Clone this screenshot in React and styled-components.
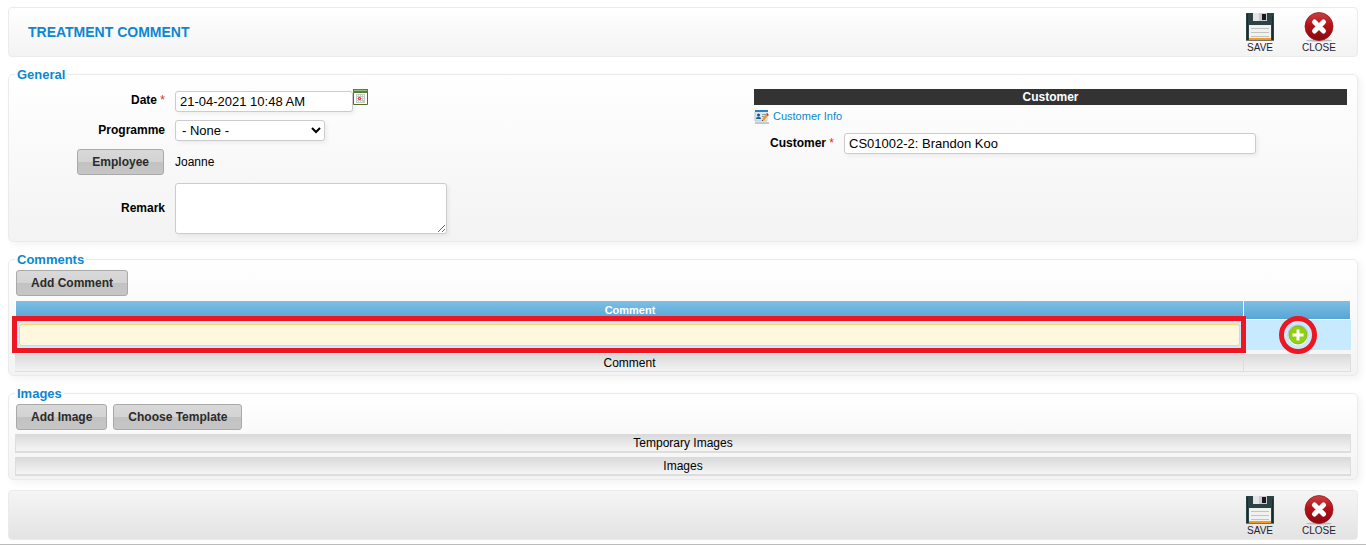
import React from 'react';
import styled, { createGlobalStyle } from 'styled-components';

const GlobalStyle = createGlobalStyle`
    * {
        box-sizing: border-box;
    }

    body {
        margin: 0;
        background: #fff;
        color: #000;
        font: 12px/15px "Liberation Sans", Arial, sans-serif;
    }

    input, select, textarea, button {
        margin: 0;
        font-family: inherit;
    }
`;

const Page = styled.main`
    display: flex;
    flex-direction: column;
    gap: 10px;
    padding: 7px 8px 4px;
    border-bottom: 1px solid #bbb;
`;

const Toolbar = styled.div`
    display: flex;
    justify-content: flex-end;
    gap: 19px;
    height: 50px;
    padding: 4px 18px 0 19px;
    border: 1px solid #ebebeb;
    border-radius: 4px;
    background: ${props => props.$dark
        ? 'linear-gradient(#f5f5f5, #e3e3e3)'
        : 'linear-gradient(#fff, #f3f3f3)'};
`;

const Title = styled.h1`
    flex: 1;
    margin: 0;
    color: #0c87d0;
    font-size: 14px;
    line-height: 40px;
`;

const ToolButton = styled.button`
    display: flex;
    flex-direction: column;
    align-items: center;
    width: 40px;
    padding: 0;
    border: 0;
    background: none;
    color: #1c2430;
    font-size: 10px;
    line-height: 12px;
    cursor: pointer;
`;

const Panel = styled.fieldset`
    min-width: 0;
    margin: 0;
    padding: ${props => props.$form ? '7px 10px 7px 8px' : '3px 6px'};
    border: 1px solid #ebebeb;
    border-radius: 5px;
    background: linear-gradient(#fff, #f3f3f3);
    box-shadow: 3px 3px 6px rgba(60, 90, 110, 0.07);
`;

const Legend = styled.legend`
    margin-left: ${props => props.$form ? '-2px' : '0'};
    padding: 0 2px;
    color: #0c87d0;
    font-size: 13px;
    font-weight: bold;
    line-height: 15px;
`;

const Columns = styled.div`
    display: grid;
    grid-template-columns: 737fr 593fr;
    align-items: start;
`;

const Fields = styled.div`
    display: grid;
    grid-template-columns: ${props => props.$labels} 1fr;
    align-items: center;
    gap: 8px 10px;
`;

const Label = styled.label`
    font-weight: bold;
    text-align: right;
`;

const Required = styled.span`
    color: #e8281e;
    font-weight: normal;
`;

const DateCell = styled.div`
    display: flex;
    align-items: flex-start;
    height: 23px;
`;

const TextInput = styled.input`
    width: ${props => props.$width};
    height: 21px;
    padding: 0 4px;
    border: 1px solid #ccc;
    border-radius: 3px;
    background: #fff;
    box-shadow: 2px 2px 4px rgba(0, 0, 0, 0.06);
    color: #000;
    font-size: 13px;

    ${DateCell} & {
        align-self: flex-end;
    }
`;

const Select = styled.select`
    width: 150px;
    height: 21px;
    padding: 0 2px;
    border: 1px solid #ccc;
    border-radius: 3px;
    background-color: #fff;
    box-shadow: 2px 2px 4px rgba(0, 0, 0, 0.06);
    color: #000;
    font-size: 13px;
`;

const TextArea = styled.textarea`
    display: block;
    width: 272px;
    height: 51px;
    border: 1px solid #ccc;
    border-radius: 3px;
    background: #fff;
    box-shadow: 2px 2px 4px rgba(0, 0, 0, 0.06);
    font-size: 13px;
`;

const IconButton = styled.button`
    display: flex;
    padding: 0;
    border: 0;
    background: none;
    cursor: pointer;
`;

const Button = styled.button`
    justify-self: end;
    height: 26px;
    padding: 0 14px;
    border: 1px solid #a9a9a9;
    border-radius: 3px;
    background: linear-gradient(#d9d9d9, #d3d3d3 50%, #c2c2c2 50%, #c6c6c6);
    color: #2b2b2b;
    font-size: 12px;
    font-weight: bold;
    white-space: nowrap;
    cursor: pointer;

    ${Fields} & {
        margin-right: 1px;
    }
`;

const Buttons = styled.div`
    display: flex;
    gap: 6px;
    padding: 0 1px;
`;

const Banner = styled.h2`
    margin: 0;
    background: #333;
    color: #fff;
    font-size: 12px;
    line-height: 16px;
    text-align: center;
`;

const InfoLink = styled.a`
    display: flex;
    align-items: center;
    gap: 3px;
    height: 22px;
    margin-bottom: 6px;
    color: #0c87d0;
    font-size: 11px;
    text-decoration: none;
`;

const Table = styled.table`
    width: 100%;
    margin-top: 5px;
    border-spacing: 0;
    table-layout: fixed;
`;

const HeadCell = styled.th`
    width: ${props => props.$width || 'auto'};
    height: 19px;
    padding: 0;
    background: linear-gradient(#7fbfe3, #55a4d6);
    box-shadow: inset -1px -1px #fff;
    color: #fff;
    font-size: 11px;
    line-height: 18px;
    vertical-align: top;

    &:first-child {
        border-left: 1px solid #fff;
    }
`;

const Cell = styled.td`
    position: relative;
    z-index: ${props => props.$marked ? 1 : 0};
    height: 30px;
    padding: 0 4px;
    background: #c8eafe;
    vertical-align: middle;

    ${IconButton} {
        margin: 0 auto;
    }
`;

const CommentInput = styled.input`
    display: block;
    width: 100%;
    height: 22px;
    padding: 0 4px;
    border: 1px solid #fbd76f;
    border-radius: 3px;
    background: #fff8df;
    font-size: 13px;
`;

const BoxMark = styled.div`
    position: absolute;
    inset: -4px -2px -3px -3px;
    border: 5px solid #ee1620;
    pointer-events: none;
`;

const RingMark = styled.div`
    position: absolute;
    inset: -4px 0;
    width: 38px;
    height: 38px;
    margin: auto;
    border: 5px solid #ee1620;
    border-radius: 50%;
    pointer-events: none;
`;

const FootCell = styled.td`
    height: 22px;
    padding: 0;
    border-top: 4px solid transparent;
    background: linear-gradient(#d9d9d9, #f5f5f5) padding-box;
    box-shadow: inset -1px -1px #ddd;
    line-height: 18px;
    text-align: center;
`;

const Bar = styled.div`
    height: 19px;
    margin-top: 4px;
    border: solid #ddd;
    border-width: 0 1px 2px;
    background: linear-gradient(#d9d9d9, #f5f5f5);
    line-height: 18px;
    text-align: center;
`;

const SaveIcon = () => (
    <svg width="30" height="30" viewBox="0 0 30 30" aria-hidden="true">
        <path d="M1 1h28v28H1z" fill="#2b4344" />
        <path d="M2 2h1v26H2zM27 4h1v24h-1z" fill="#1b2c2e" />
        <path d="M8 1h14v8H8z" fill="#c9cbcd" />
        <path d="M8 1h6v8H8z" fill="#e4e6e6" />
        <path d="M17 2h4v6h-4z" fill="#16181c" />
        <path d="M4 13h22v14H4z" fill="#f1f1f0" />
        <path d="M6 16.500h18M6 20.500h18M6 24.500h18" stroke="#c2c4c4" />
        <path d="M4 26h22v2H4z" fill="#f49b1f" />
        <path d="M1 28h28v1H1z" fill="#7b7367" />
    </svg>
);

const CloseIcon = () => (
    <svg width="30" height="30" viewBox="0 0 30 30" aria-hidden="true">
        <defs>
            <linearGradient id="closeFill" x1="0" y1="0" x2="0" y2="1">
                <stop offset="0" stopColor="#c94343" />
                <stop offset="0.45" stopColor="#b51219" />
                <stop offset="1" stopColor="#850b10" />
            </linearGradient>
        </defs>
        <ellipse cx="15" cy="28.500" rx="13" ry="1.200" fill="#b9b9b9" />
        <circle cx="15" cy="14.500" r="14" fill="url(#closeFill)" stroke="#9b1a1d" strokeWidth="0.8" />
        <path d="M10.500 10l9 9M19.500 10l-9 9" stroke="#fff" strokeWidth="5" strokeLinecap="round" />
    </svg>
);

const CalendarIcon = () => (
    <svg width="15" height="16" viewBox="0 0 15 16" aria-hidden="true">
        <path d="M.5.5h14v15H.5z" fill="#fff" stroke="#556b2a" />
        <path d="M0 0h15v4H0z" fill="#55803a" />
        <path d="M1 1h13v1H1z" fill="#9dbf84" />
        <path d="M3 5h9v9H3z" fill="#c9c9c9" />
        <path d="M4 6h1v1H4zM6 6h1v1H6zM8 6h1v1H8zM10 6h1v1h-1zM4 8h1v1H4zM8 8h1v1H8zM10 8h1v1h-1zM4 10h1v1H4zM8 10h1v1H8zM10 10h1v1h-1zM4 12h1v1H4zM6 12h1v1H6zM8 12h1v1H8z" fill="#fff" />
        <path d="M5.500 8.500h2v2h-2z" fill="#f4c2b8" stroke="#df4a3c" />
    </svg>
);

const CustomerIcon = () => (
    <svg width="16" height="16" viewBox="0 0 16 16" aria-hidden="true">
        <path d="M1 3h13v10H1z" fill="#dfe8ee" />
        <path d="M1 2h13v2H1z" fill="#2a86bd" />
        <path d="M1 4v9h12" fill="none" stroke="#b8c4cb" />
        <circle cx="4.500" cy="7" r="1.500" fill="#29507a" />
        <path d="M2 11c0-3 5-3 5 0z" fill="#1d65a4" />
        <path d="M8 6.500h4M8 8.500h3" stroke="#8a9aa6" />
        <path d="M9 12l4-5" stroke="#f09a25" strokeWidth="2.500" />
        <path d="M13 7l1-1" stroke="#b92f25" strokeWidth="2.500" />
        <path d="M8 13l1-1" stroke="#5d4630" />
        <path d="M1 15h14" stroke="#c9c9c4" strokeWidth="2" />
    </svg>
);

const PlusIcon = () => (
    <svg width="22" height="22" viewBox="0 0 22 22" aria-hidden="true">
        <circle cx="11" cy="11" r="10.500" fill="#bfc6d0" />
        <circle cx="11" cy="12" r="9.800" fill="#f4fbf0" />
        <circle cx="11" cy="11" r="9" fill="#92d00e" stroke="#78b414" strokeWidth="0.8" />
        <path d="M11 5.500v11M5.500 11h11" stroke="#fff" strokeWidth="3" />
    </svg>
);

const ToolButtons = () => (
    <>
        <ToolButton type="button"><SaveIcon />SAVE</ToolButton>
        <ToolButton type="button"><CloseIcon />CLOSE</ToolButton>
    </>
);

const App = () => {
    return (
        <>
            <GlobalStyle />
            <Page>
                <Toolbar>
                    <Title>TREATMENT COMMENT</Title>
                    <ToolButtons />
                </Toolbar>

                <Panel $form>
                    <Legend $form>General</Legend>
                    <Columns>
                        <Fields $labels="148px">
                            <Label htmlFor="date">Date <Required>*</Required></Label>
                            <DateCell>
                                <TextInput id="date" $width="178px" defaultValue="21-04-2021 10:48 AM" />
                                <IconButton type="button" aria-label="Pick a date"><CalendarIcon /></IconButton>
                            </DateCell>
                            <Label htmlFor="programme">Programme</Label>
                            <Select id="programme">
                                <option>- None -</option>
                            </Select>
                            <Button type="button">Employee</Button>
                            <span>Joanne</span>
                            <Label htmlFor="remark">Remark</Label>
                            <TextArea id="remark" />
                        </Fields>
                        <div>
                            <Banner>Customer</Banner>
                            <InfoLink href="#customer"><CustomerIcon />Customer Info</InfoLink>
                            <Fields $labels="80px">
                                <Label htmlFor="customer">Customer <Required>*</Required></Label>
                                <TextInput id="customer" $width="412px" defaultValue="CS01002-2: Brandon Koo" />
                            </Fields>
                        </div>
                    </Columns>
                </Panel>

                <Panel>
                    <Legend>Comments</Legend>
                    <Buttons>
                        <Button type="button">Add Comment</Button>
                    </Buttons>
                    <Table>
                        <thead>
                            <tr>
                                <HeadCell>Comment</HeadCell>
                                <HeadCell $width="107px" aria-label="Actions" />
                            </tr>
                        </thead>
                        <tbody>
                            <tr>
                                <Cell $marked>
                                    <CommentInput aria-label="Comment" />
                                    <BoxMark />
                                </Cell>
                                <Cell>
                                    <IconButton type="button" aria-label="Add"><PlusIcon /></IconButton>
                                    <RingMark />
                                </Cell>
                            </tr>
                        </tbody>
                        <tfoot>
                            <tr>
                                <FootCell>Comment</FootCell>
                                <FootCell />
                            </tr>
                        </tfoot>
                    </Table>
                </Panel>

                <Panel>
                    <Legend>Images</Legend>
                    <Buttons>
                        <Button type="button">Add Image</Button>
                        <Button type="button">Choose Template</Button>
                    </Buttons>
                    <Bar>Temporary Images</Bar>
                    <Bar>Images</Bar>
                </Panel>

                <Toolbar $dark>
                    <ToolButtons />
                </Toolbar>
            </Page>
        </>
    );
};

export default App;
